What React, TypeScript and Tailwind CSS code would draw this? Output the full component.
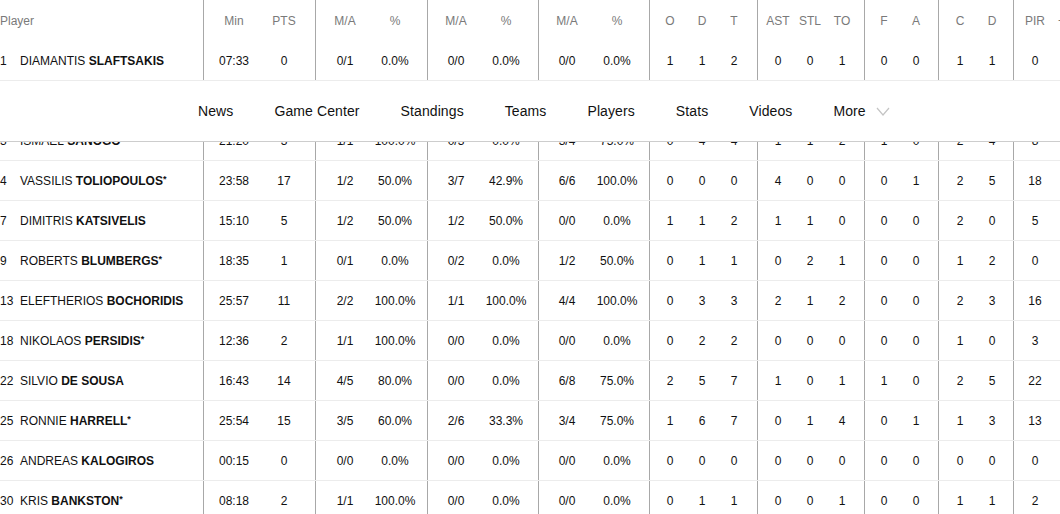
import React from 'react';

type Group = { box: string; cell: string; labels: string[] };

// column groups after the player column, widths measured off the design
const groups: Group[] = [
  { box: 'w-[112px] pl-[5px]', cell: 'w-[50px]', labels: ['Min', 'PTS'] },
  { box: 'w-[112px] pl-[4px]', cell: 'w-[50px]', labels: ['M/A', '%'] },
  { box: 'w-[111px] pl-[3px]', cell: 'w-[50px]', labels: ['M/A', '%'] },
  { box: 'w-[111px] pl-[3px]', cell: 'w-[50px]', labels: ['M/A', '%'] },
  { box: 'w-[108px] pl-[4px]', cell: 'w-[32px]', labels: ['O', 'D', 'T'] },
  { box: 'w-[107px] pl-[4px]', cell: 'w-[32px]', labels: ['AST', 'STL', 'TO'] },
  { box: 'w-[74px] pl-[3px]', cell: 'w-[32px]', labels: ['F', 'A'] },
  { box: 'w-[75px] pl-[5px]', cell: 'w-[32px]', labels: ['C', 'D'] },
  { box: 'w-[44px] pl-[5px]', cell: 'w-[32px]', labels: ['PIR'] },
];

interface Player {
  no: string;
  first: string;
  last: string;
  starter?: boolean;
  stats: string[];
}

const players: Player[] = [
  { no: '1', first: 'DIAMANTIS', last: 'SLAFTSAKIS', stats: ['07:33', '0', '0/1', '0.0%', '0/0', '0.0%', '0/0', '0.0%', '1', '1', '2', '0', '0', '1', '0', '0', '1', '1', '0'] },
  { no: '2', first: 'GEORGIOS', last: 'KALAITZAKIS', stats: ['10:12', '4', '2/3', '66.7%', '0/1', '0.0%', '0/0', '0.0%', '0', '1', '1', '0', '0', '0', '1', '0', '0', '0', '3'] },
  { no: '3', first: 'ISMAEL', last: 'SANOGO', stats: ['21:20', '3', '1/1', '100.0%', '0/3', '0.0%', '3/4', '75.0%', '0', '4', '4', '1', '1', '2', '1', '0', '2', '4', '8'] },
  { no: '4', first: 'VASSILIS', last: 'TOLIOPOULOS', starter: true, stats: ['23:58', '17', '1/2', '50.0%', '3/7', '42.9%', '6/6', '100.0%', '0', '0', '0', '4', '0', '0', '0', '1', '2', '5', '18'] },
  { no: '7', first: 'DIMITRIS', last: 'KATSIVELIS', stats: ['15:10', '5', '1/2', '50.0%', '1/2', '50.0%', '0/0', '0.0%', '1', '1', '2', '1', '1', '0', '0', '0', '2', '0', '5'] },
  { no: '9', first: 'ROBERTS', last: 'BLUMBERGS', starter: true, stats: ['18:35', '1', '0/1', '0.0%', '0/2', '0.0%', '1/2', '50.0%', '0', '1', '1', '0', '2', '1', '0', '0', '1', '2', '0'] },
  { no: '13', first: 'ELEFTHERIOS', last: 'BOCHORIDIS', stats: ['25:57', '11', '2/2', '100.0%', '1/1', '100.0%', '4/4', '100.0%', '0', '3', '3', '2', '1', '2', '0', '0', '2', '3', '16'] },
  { no: '18', first: 'NIKOLAOS', last: 'PERSIDIS', starter: true, stats: ['12:36', '2', '1/1', '100.0%', '0/0', '0.0%', '0/0', '0.0%', '0', '2', '2', '0', '0', '0', '0', '0', '1', '0', '3'] },
  { no: '22', first: 'SILVIO', last: 'DE SOUSA', stats: ['16:43', '14', '4/5', '80.0%', '0/0', '0.0%', '6/8', '75.0%', '2', '5', '7', '1', '0', '1', '1', '0', '2', '5', '22'] },
  { no: '25', first: 'RONNIE', last: 'HARRELL', starter: true, stats: ['25:54', '15', '3/5', '60.0%', '2/6', '33.3%', '3/4', '75.0%', '1', '6', '7', '0', '1', '4', '0', '1', '1', '3', '13'] },
  { no: '26', first: 'ANDREAS', last: 'KALOGIROS', stats: ['00:15', '0', '0/0', '0.0%', '0/0', '0.0%', '0/0', '0.0%', '0', '0', '0', '0', '0', '0', '0', '0', '0', '0', '0'] },
  { no: '30', first: 'KRIS', last: 'BANKSTON', starter: true, stats: ['08:18', '2', '1/1', '100.0%', '0/0', '0.0%', '0/0', '0.0%', '0', '1', '1', '0', '0', '1', '0', '0', '1', '1', '2'] },
];

const navItems = ['News', 'Game Center', 'Standings', 'Teams', 'Players', 'Stats', 'Videos'];

function Cells({ values }: { values: string[] }) {
  let i = 0;
  return (
    <>
      {groups.map((g, gi) => (
        <div key={gi} className={`${g.box} shrink-0 h-full flex items-center border-l border-[#a8a8a8]`}>
          {g.labels.map((_, li) => {
            const v = values[i++];
            return (
              <div key={li} className={`${g.cell} text-center`}>
                {v}
              </div>
            );
          })}
        </div>
      ))}
    </>
  );
}

export default function App() {
  return (
    <div
      className="relative w-[1060px] h-[514px] overflow-hidden bg-white"
      style={{ fontFamily: '"Liberation Sans", Arial, sans-serif' }}
    >
      {/* header */}
      <div className="flex h-[41px] text-[12px] text-[#7a7a7a] whitespace-nowrap">
        <div className="w-[203px] shrink-0 flex items-center">Player</div>
        <Cells values={groups.flatMap((g) => g.labels)} />
        <div className="w-[40px] shrink-0 flex items-center pl-[1px]">+/-</div>
      </div>

      {players.map((p) => (
        <div key={p.no} className="flex h-[40px] border-b border-[#ececec] text-[12px] text-[#111] whitespace-nowrap">
          <div className="w-[203px] shrink-0 flex items-center">
            <span className="w-[20px] shrink-0">{p.no}</span>
            <span>{p.first}&nbsp;</span>
            <span className="font-bold">{p.last}</span>
            {p.starter && <span className="text-[9px] font-bold align-super self-start mt-[12px]">*</span>}
          </div>
          <Cells values={p.stats} />
          <div className="w-[40px] shrink-0" />
        </div>
      ))}

      {/* sticky site nav laid over the table */}
      <nav className="absolute left-0 right-0 top-[81px] h-[61px] bg-white border-b border-[#cdcdcd] flex items-center pl-[198px] gap-[41px] text-[14px] tracking-[0.1px] text-[#111]">
        {navItems.map((n) => (
          <span key={n}>{n}</span>
        ))}
        <span className="flex items-center gap-[10px]">
          More
          <svg width="14" height="9" viewBox="0 0 14 9" fill="none">
            <polyline points="1,1 7,8 13,1" stroke="#c4c4c4" strokeWidth="1.2" />
          </svg>
        </span>
      </nav>
    </div>
  );
}
